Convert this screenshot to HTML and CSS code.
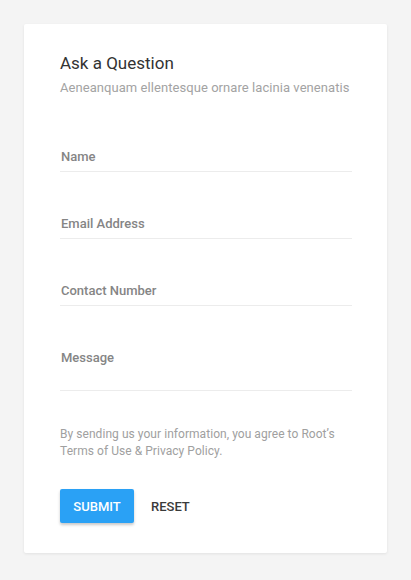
FILE: index.html
```html
<!DOCTYPE html>
<html lang="en">
<head>
<meta charset="utf-8">
<link rel="stylesheet" href="styles.css">
</head>
<body>
<div class="card">
  <h1 class="title">Ask a Question</h1>
  <p class="subtitle">Aeneanquam ellentesque ornare lacinia venenatis</p>
  <div class="field"><span class="label">Name</span></div>
  <div class="field"><span class="label">Email Address</span></div>
  <div class="field"><span class="label">Contact Number</span></div>
  <div class="field field-message"><span class="label">Message</span></div>
  <p class="note">By sending us your information, you agree to Root’s Terms of Use &amp; Privacy Policy.</p>
  <div class="actions">
    <button class="btn btn-primary">SUBMIT</button>
    <button class="btn btn-flat">RESET</button>
  </div>
</div>
</body>
</html>
```

FILE: styles.css
```css
html, body {
  margin: 0;
  padding: 0;
  background: #f4f4f4;
}
body {
  padding: 24px;
  font-family: Roboto, "Noto Sans", sans-serif;
}
.card {
  background: #fff;
  height: 529px;
  box-sizing: border-box;
  padding: 27px 35px 30px 36px;
  box-shadow: 0 1px 3px rgba(0,0,0,0.08);
  border-radius: 2px;
}
.title {
  margin: 0;
  font-size: 17px;
  line-height: 24px;
  font-weight: 400;
  color: #333;
}
.subtitle {
  margin: 4px 0 0;
  font-size: 13px;
  line-height: 18px;
  color: #a3a3a3;
  letter-spacing: 0.06px;
  white-space: nowrap;
}
.field {
  margin-top: 50px;
  padding-bottom: 4px;
  border-bottom: 1px solid #ececec;
}
.field + .field {
  margin-top: 42px;
}
.field-message {
  padding-bottom: 22px;
}
.label {
  display: block;
  font-size: 13px;
  line-height: 20px;
  font-weight: 500;
  color: #858585;
  padding-left: 1px;
}
.note {
  margin: 35px 0 0;
  font-size: 12px;
  line-height: 17px;
  color: #a0a0a0;
  letter-spacing: 0.05px;
}
.actions {
  margin-top: 29px;
  display: flex;
  align-items: center;
}
.btn {
  font-family: Roboto, "Noto Sans", sans-serif;
  font-size: 13px;
  font-weight: 500;
  height: 34px;
  border: none;
  border-radius: 2px;
  cursor: pointer;
}
.btn-primary {
  background: #2aa1f5;
  color: #fff;
  padding: 0 13px;
  width: 74px;
  box-shadow: 0 2px 3px rgba(0,0,0,0.22);
}
.btn-flat {
  background: transparent;
  color: #3a3a3a;
  padding: 0 0 0 17px;
}
```
